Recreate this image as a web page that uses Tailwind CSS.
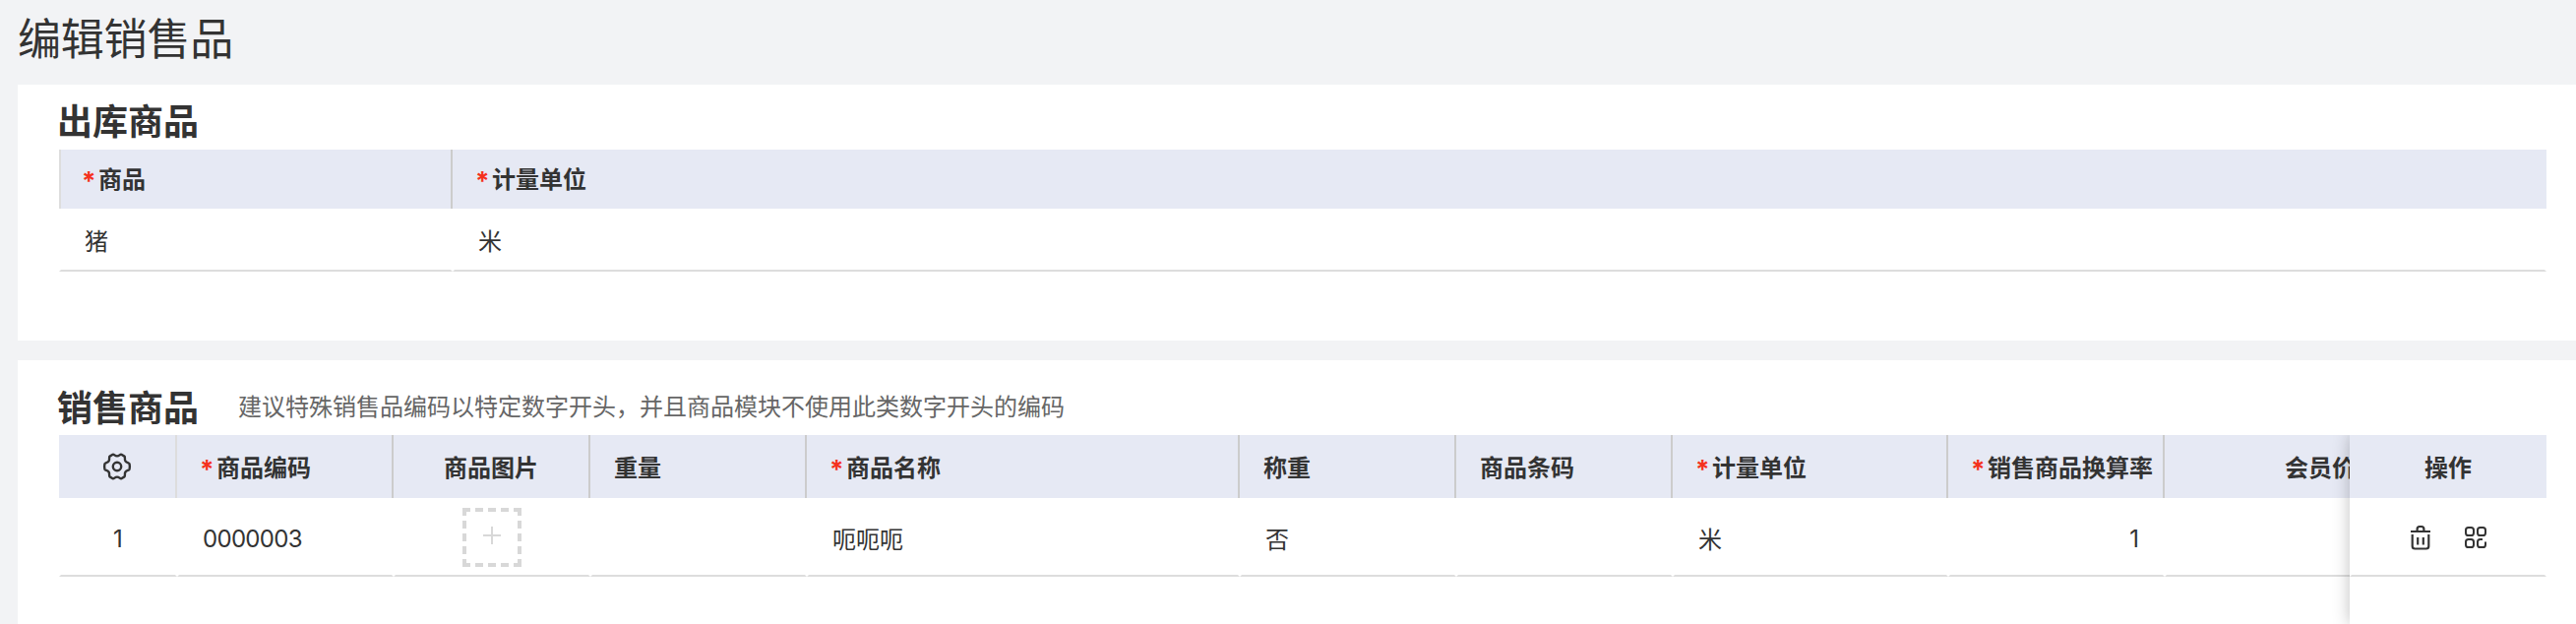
<!DOCTYPE html>
<html lang="zh-CN">
<head>
  <meta charset="UTF-8" />
  <meta name="viewport" content="width=device-width, initial-scale=1.0"/>
  <title>编辑销售品</title>
  <script src="https://cdn.jsdelivr.net/npm/@tailwindcss/browser@4"></script>
</head>
<body class="h-[634px] overflow-hidden bg-[#f2f3f5] pl-[18px] font-['Noto_Sans_CJK_SC',sans-serif] text-[24px] leading-[36px] text-[#333]">
  <h1 class="h-[86px] pt-[5px] text-[44px] leading-[64px] tracking-[-0.2px]">编辑销售品</h1>

  <!-- 出库商品 -->
  <section class="h-[260px] bg-white pl-[42px] pr-[30px] pt-[10px]">
    <h2 class="-mt-px mb-px h-[56px] -ml-[2px] text-[36px] leading-[52px] font-bold">出库商品</h2>
    <table class="w-full table-fixed border-separate border-spacing-0 text-left">
      <colgroup>
        <col class="w-[400px]" />
        <col />
      </colgroup>
      <thead>
        <tr class="h-[60px] bg-[#e6e9f4] font-bold">
          <th class="border-l-2 border-l-[#ddd] border-r-2 border-r-[#ccc] p-0 pb-[2px] pl-[22px]"><span class="-ml-px inline-block w-[17px] align-[-2px] font-['Inter',sans-serif] text-[26px] leading-none text-[#f5311d]">*</span>商品</th>
          <th class="p-0 pb-[2px] pl-6"><span class="-ml-px inline-block w-[17px] align-[-2px] font-['Inter',sans-serif] text-[26px] leading-none text-[#f5311d]">*</span>计量单位</th>
        </tr>
      </thead>
      <tbody>
        <tr class="h-[64px]">
          <td class="border-x-2 border-b-2 border-x-transparent border-b-[#ddd] p-0 pt-[2px] pl-6">猪</td>
          <td class="border-x-2 border-b-2 border-x-transparent border-b-[#ddd] p-0 pt-[2px] pl-6">米</td>
        </tr>
      </tbody>
    </table>
  </section>

  <!-- 销售商品 -->
  <section class="mt-5 h-[268px] bg-white pl-[42px] pr-[30px] pt-5">
    <div class="flex h-[56px] items-start">
      <h2 class="-ml-[2px] w-[184px] text-[36px] leading-[52px] font-bold">销售商品</h2>
      <p class="leading-[52px] text-[#666]">建议特殊销售品编码以特定数字开头，并且商品模块不使用此类数字开头的编码</p>
    </div>
    <div class="relative h-[192px] overflow-hidden">
      <table class="w-[2360px] table-fixed border-separate border-spacing-0 text-left">
        <colgroup>
          <col class="w-[120px]" />
          <col class="w-[220px]" />
          <col class="w-[200px]" />
          <col class="w-[220px]" />
          <col class="w-[440px]" />
          <col class="w-[220px]" />
          <col class="w-[220px]" />
          <col class="w-[280px]" />
          <col class="w-[220px]" />
          <col class="w-[220px]" />
        </colgroup>
        <thead>
          <tr class="h-[64px] bg-[#e6e9f4] font-bold whitespace-nowrap">
            <th class="border-r-2 border-[#ddd] p-0">
              <svg class="mx-auto" width="30" height="30" viewBox="0 0 30 30" fill="none" stroke="#333" stroke-width="2.4" stroke-linejoin="round">
                <path d="M10.6 2.8 C12 2.2 12.6 4.4 15 4.4 C17.4 4.4 18 2.2 19.4 2.8 L22.4 4.6 C23.6 5.4 22.2 7.2 23.4 9.4 C24.6 11.4 27.2 10.9 27.6 12.4 Q28.2 15 27.6 17.6 C27.2 19.1 24.6 18.6 23.4 20.6 C22.2 22.8 23.6 24.6 22.4 25.4 L19.4 27.2 C18 27.8 17.4 25.6 15 25.6 C12.6 25.6 12 27.8 10.6 27.2 L7.6 25.4 C6.4 24.6 7.8 22.8 6.6 20.6 C5.4 18.6 2.8 19.1 2.4 17.6 Q1.8 15 2.4 12.4 C2.8 10.9 5.4 11.4 6.6 9.4 C7.8 7.2 6.4 5.4 7.6 4.6 Z" />
                <circle cx="15" cy="15" r="4.2" />
              </svg>
            </th>
            <th class="border-r-2 border-[#ccc] p-0 pl-6"><span class="-ml-px inline-block w-[17px] align-[-2px] font-['Inter',sans-serif] text-[26px] leading-none text-[#f5311d]">*</span>商品编码</th>
            <th class="border-r-2 border-[#ccc] p-0 text-center">商品图片</th>
            <th class="border-r-2 border-[#ccc] p-0 pl-6">重量</th>
            <th class="border-r-2 border-[#ccc] p-0 pl-6"><span class="-ml-px inline-block w-[17px] align-[-2px] font-['Inter',sans-serif] text-[26px] leading-none text-[#f5311d]">*</span>商品名称</th>
            <th class="border-r-2 border-[#ccc] p-0 pl-6">称重</th>
            <th class="border-r-2 border-[#ccc] p-0 pl-6">商品条码</th>
            <th class="border-r-2 border-[#ccc] p-0 pl-6"><span class="-ml-px inline-block w-[17px] align-[-2px] font-['Inter',sans-serif] text-[26px] leading-none text-[#f5311d]">*</span>计量单位</th>
            <th class="border-r-2 border-[#ccc] p-0 pl-6"><span class="-ml-px inline-block w-[17px] align-[-2px] font-['Inter',sans-serif] text-[26px] leading-none text-[#f5311d]">*</span>销售商品换算率</th>
            <th class="border-r-2 border-[#ccc] p-0 pr-6 text-right">会员价</th>
          </tr>
        </thead>
        <tbody>
          <tr class="h-[80px] *:border-x-2 *:border-b-2 *:border-x-transparent *:border-b-[#ddd] *:p-0">
            <td class="text-center font-['Inter',sans-serif]"><div class="pt-[5px]">1</div></td>
            <td class="font-['Inter',sans-serif] tracking-[-0.7px]"><div class="pt-[5px] pl-6">0000003</div></td>
            <td>
              <div class="mx-auto mt-[2px] flex h-[60px] w-[60px] justify-center border-4 border-dashed border-[#d8d8d8] pt-[15px]">
                <svg width="18" height="18" viewBox="0 0 18 18" stroke="#d8d8d8" stroke-width="2">
                  <path d="M9 0V18M0 9H18" />
                </svg>
              </div>
            </td>
            <td></td>
            <td><div class="pt-[3px] pl-6">呃呃呃</div></td>
            <td><div class="pt-[3px] pl-6">否</div></td>
            <td></td>
            <td><div class="pt-[3px] pl-6">米</div></td>
            <td class="text-right font-['Inter',sans-serif]"><div class="pt-[5px] pr-6">1</div></td>
            <td></td>
          </tr>
        </tbody>
      </table>

      <!-- 固定操作列 -->
      <div class="absolute inset-y-0 right-0 w-[200px] bg-white shadow-[0_0_16px_rgba(0,0,0,0.25)] [clip-path:inset(0_0_0_-20px)]">
        <div class="flex h-[64px] items-center justify-center bg-[#e6e9f4] font-bold">操作</div>
        <div class="flex h-[80px] items-center justify-center gap-[33px] border-x-2 border-b-2 border-x-transparent border-b-[#ddd] pt-px pl-px">
          <svg width="22" height="26" viewBox="0 0 22 26" fill="none" stroke="#333" stroke-width="2.2">
            <path d="M1 7H21M7.6 7V4.6Q7.6 2 10 2H12Q14.4 2 14.4 4.6V7M2.7 10V22Q2.7 24.5 5.2 24.5H16.8Q19.3 24.5 19.3 22V10M8.2 13V20.5M13.8 13V20.5" />
          </svg>
          <svg width="24" height="24" viewBox="0 0 24 24" fill="none" stroke="#333" stroke-width="2">
            <rect x="2" y="2" width="8" height="8" rx="2.6" />
            <rect x="14" y="2" width="8" height="8" rx="2.6" />
            <rect x="2" y="14" width="8" height="8" rx="2.6" />
            <path d="M19 14H16.6Q14 14 14 16.6V19.4Q14 22 16.6 22H19.4Q22 22 22 19.4V16.5" />
          </svg>
        </div>
      </div>
    </div>
  </section>
</body>
</html>
